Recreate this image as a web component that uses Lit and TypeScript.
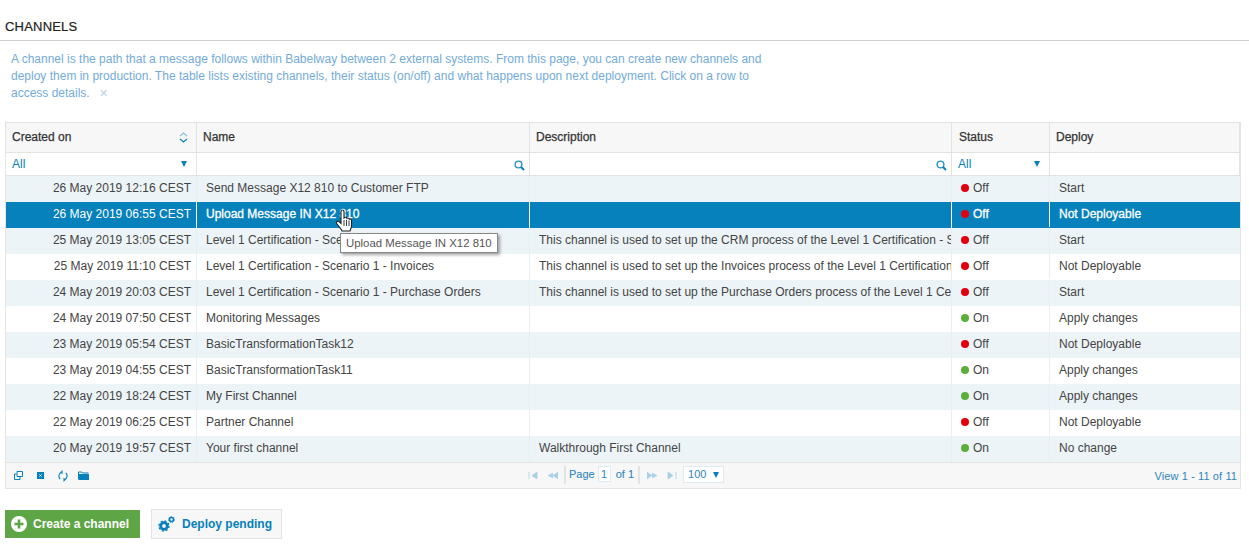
import { LitElement, html, css } from 'lit';
import { customElement } from 'lit/decorators.js';

const rows = [
  ['26 May 2019 12:16 CEST', 'Send Message X12 810 to Customer FTP', '', 'Off', 'Start'],
  ['26 May 2019 06:55 CEST', 'Upload Message IN X12 810', '', 'Off', 'Not Deployable'],
  ['25 May 2019 13:05 CEST', 'Level 1 Certification - Scenario 1 - CRM', 'This channel is used to set up the CRM process of the Level 1 Certification - Scenario 1', 'Off', 'Start'],
  ['25 May 2019 11:10 CEST', 'Level 1 Certification - Scenario 1 - Invoices', 'This channel is used to set up the Invoices process of the Level 1 Certification - Scenario 1', 'Off', 'Not Deployable'],
  ['24 May 2019 20:03 CEST', 'Level 1 Certification - Scenario 1 - Purchase Orders', 'This channel is used to set up the Purchase Orders process of the Level 1 Certification', 'Off', 'Start'],
  ['24 May 2019 07:50 CEST', 'Monitoring Messages', '', 'On', 'Apply changes'],
  ['23 May 2019 05:54 CEST', 'BasicTransformationTask12', '', 'Off', 'Not Deployable'],
  ['23 May 2019 04:55 CEST', 'BasicTransformationTask11', '', 'On', 'Apply changes'],
  ['22 May 2019 18:24 CEST', 'My First Channel', '', 'On', 'Apply changes'],
  ['22 May 2019 06:25 CEST', 'Partner Channel', '', 'Off', 'Not Deployable'],
  ['20 May 2019 19:57 CEST', 'Your first channel', 'Walkthrough First Channel', 'On', 'No change'],
];

const search = html`<svg class="search" width="11" height="11" viewBox="0 0 11 11"><circle cx="4.5" cy="4.5" r="3.4" fill="none" stroke="#2a93c6" stroke-width="1.4"/><path d="M7 7l3 3" stroke="#0681bb" stroke-width="2"/></svg>`;
const caret = html`<span class="caret"></span>`;

@customElement('app-root')
export class AppRoot extends LitElement {
  static styles = css`
    :host {
      display: block;
      height: 554px;
      overflow: hidden;
      background: #fff;
      font-family: 'Liberation Sans', Arial, sans-serif;
      font-size: 12px;
      color: #444;
    }
    .title {
      margin: 0;
      padding: 19px 0 5px 5px;
      height: 16px;
      line-height: 16px;
      font-size: 13px;
      font-weight: 400;
      letter-spacing: 0.2px;
      color: #222;
      -webkit-text-stroke: 0.2px #222;
      border-bottom: 1px solid #d0d0d0;
    }
    .intro {
      width: 770px;
      margin: 0;
      padding: 10px 0 0 11px;
      height: 70px;
      box-sizing: border-box;
      line-height: 17px;
      color: #74abd8;
    }
    .intro .x { margin-left: 6px; color: #b9d3e6; font-size: 11px; }
    .table {
      position: relative;
      margin: 11px 8px 0 5px;
      border: 1px solid #e3e3e3;
    }
    .row {
      display: grid;
      grid-template-columns: 191px 333px 422px 98px 1fr;
      height: 26px;
      line-height: 25px;
      background: #fff;
      color: #444;
    }
    .row.odd { background: #ecf4f8; }
    .row.sel { background: #0681bb; color: #fff; -webkit-text-stroke: 0.3px #fff; }
    .row.sel .date { -webkit-text-stroke: 0; }
    .row > div {
      border-right: 1px solid #e6eff4;
      white-space: nowrap;
      overflow: hidden;
      box-sizing: border-box;
    }
    .row.sel > div { border-right-color: #fff; }
    .row > div:last-child { border-right: 0; }
    .date { text-align: right; padding-right: 5px; }
    .name { padding-left: 9px; }
    .desc { padding-left: 9px; }
    .status { padding-left: 9px; height: 25px; display: flex; align-items: center; gap: 4px; }
    .deploy { padding-left: 9px; }
    .dot { width: 8px; height: 8px; margin-top: -1px; border-radius: 50%; flex: none; }
    .dot.Off { background: #e2000f; }
    .dot.On { background: #5aaf3c; }
    .row.head {
      height: 30px;
      line-height: 28px;
      background: #f7f7f7;
      color: #333;
      -webkit-text-stroke: 0.25px #333;
      border-bottom: 1px solid #e3e3e3;
      box-sizing: border-box;
    }
    .row.head > div { border-right: 1px solid #e3e3e3; padding-left: 6px; position: relative; }
    .row.head > div:nth-child(4) { padding-left: 7px; }
    .sort { position: absolute; right: 8px; top: 9px; }
    .row.filter {
      height: 23px;
      line-height: 22px;
      background: #fff;
      color: #0681bb;
      border-bottom: 1px solid #e3e3e3;
      box-sizing: border-box;
    }
    .row.filter > div {
      border-right: 1px solid #e3e3e3;
      padding: 0 6px;
      display: flex;
      align-items: center;
      justify-content: space-between;
    }
    .caret {
      width: 0;
      height: 0;
      margin-right: 3px;
      border-left: 3.5px solid transparent;
      border-right: 3.5px solid transparent;
      border-top: 6px solid #0681bb;
    }
    .search { margin: 2px -2px 0 0; }
    .foot {
      display: grid;
      grid-template-columns: 1fr auto 1fr;
      align-items: center;
      height: 26px;
      font-size: 11px;
      background: #f7f7f7;
      border-top: 1px solid #e3e3e3;
      box-sizing: border-box;
      color: #2f86bb;
    }
    .tools { display: flex; align-items: center; padding-left: 8px; }
    .pager { display: flex; align-items: center; margin-right: 1px; }
    .pg { display: flex; gap: 9px; padding: 0 6px 0 7px; }
    .sep { width: 2px; height: 18px; margin-bottom: 2px; background: #e3e3e3; }
    .pageno {
      width: 11px;
      height: 14px;
      line-height: 14px;
      margin: 0 5px 3px 3px;
      text-align: center;
      background: #fff;
      border: 1px solid #ddeaf2;
    }
    .of { margin-bottom: 3px; -webkit-text-stroke: 0.1px #2f86bb; }
    .size {
      display: flex;
      align-items: center;
      gap: 7px;
      line-height: 15px;
      width: 41px;
      box-sizing: border-box;
      height: 17px;
      margin-bottom: 2px;
      padding: 0 0 0 4px;
      background: #fff;
      border: 1px solid #ddeaf2;
    }
    .view { text-align: right; padding-right: 3px; letter-spacing: 0.1px; }
    .actions { display: flex; align-items: center; gap: 11px; margin: 20px 0 0 5px; }
    .btn {
      display: flex;
      align-items: center;
      box-sizing: border-box;
      font-weight: 700;
    }
    .create { width: 135px; height: 28px; background: #5ea546; color: #fff; gap: 6px; padding-left: 6px; }
    .pending {
      width: 131px;
      height: 30px;
      gap: 7px;
      padding-left: 6px;
      background: #f7f7f7;
      border: 1px solid #e3e3e3;
      color: #0681bb;
    }
    .tip {
      position: absolute;
      left: 334px;
      top: 110px;
      height: 20px;
      line-height: 19px;
      padding: 0 5px;
      font-size: 11.4px;
      background: #fff;
      color: #555;
      border: 1px solid #888;
      box-sizing: border-box;
      box-shadow: 2px 2px 3px rgba(0, 0, 0, 0.35);
      white-space: nowrap;
    }
    .hand { position: absolute; left: 329px; top: 86px; }
  `;

  render() {
    return html`
      <h1 class="title">CHANNELS</h1>
      <p class="intro">
        A channel is the path that a message follows within Babelway between 2 external systems. From this page, you can create new channels and
        deploy them in production. The table lists existing channels, their status (on/off) and what happens upon next deployment. Click on a row to
        access details. <span class="x">✕</span>
      </p>
      <div class="table">
        <div class="row head">
          <div>Created on
            <svg class="sort" width="9" height="11" viewBox="0 0 9 11"><path d="M1 4l3.500-3L8 4" fill="none" stroke="#8cc0dc" stroke-width="1.200"/><path d="M1 7l3.500 3L8 7" fill="none" stroke="#0681bb" stroke-width="1.200"/></svg>
          </div>
          <div>Name</div><div>Description</div><div>Status</div><div>Deploy</div>
        </div>
        <div class="row filter">
          <div>All ${caret}</div>
          <div><span></span>${search}</div>
          <div><span></span>${search}</div>
          <div>All ${caret}</div>
          <div></div>
        </div>
        ${rows.map((r, i) => html`
          <div class="row ${i % 2 === 0 ? 'odd' : ''} ${i === 1 ? 'sel' : ''}">
            <div class="date">${r[0]}</div>
            <div class="name">${r[1]}</div>
            <div class="desc">${r[2]}</div>
            <div class="status"><span class="dot ${r[3]}"></span>${r[3]}</div>
            <div class="deploy">${r[4]}</div>
          </div>`)}
        <div class="foot">
          <div class="tools">
            <svg width="9" height="9" viewBox="0 0 9 9" style="margin-right:14px"><path d="M3 .5h5.500v5H3zM2.500 3H.5v5.500H6V6" fill="none" stroke="#0681bb"/></svg>
            <svg width="7" height="7" viewBox="0 0 7 7" style="margin-right:14px"><rect width="7" height="7" fill="#0681bb"/><path d="M2.300 2.300l2.400 2.400M4.700 2.300L2.300 4.700" stroke="#fff" stroke-width=".8"/></svg>
            <svg width="10" height="12" viewBox="0 0 10 12" style="margin-right:10px"><path d="M3.500 2.300A4 4 0 0 0 2.200 9M6.500 9.700A4 4 0 0 0 7.800 3" fill="none" stroke="#0681bb" stroke-width="1.100"/><path d="M4.500 0v4.500L2.300 2.300zM5.500 12V7.500l2.200 2.200z" fill="#0681bb"/></svg>
            <svg width="11" height="9" viewBox="0 0 11 9"><path d="M.5 8.500V1h3.300l1 1h5.700" fill="none" stroke="#0681bb"/><path d="M1 3h10v6H1z" fill="#0681bb"/></svg>
          </div>
          <div class="pager">
            <div class="pg">
              <svg width="10" height="7" viewBox="0 0 10 7"><path d="M1 0v7M9 0v7L4 3.500z" fill="#a9d0e6" stroke="#a9d0e6" stroke-width=".8"/></svg>
              <svg width="11" height="7" viewBox="0 0 11 7"><path d="M11 0v7L6 3.500zM6 1L1 3.500 6 6" fill="#a9d0e6" stroke="#a9d0e6" stroke-width=".6"/></svg>
            </div>
            <span class="sep"></span>
            <span class="of" style="margin-left:3px">Page</span><span class="pageno">1</span><span class="of">of 1</span>
            <span class="sep" style="margin-left:4px"></span>
            <div class="pg">
              <svg width="11" height="7" viewBox="0 0 11 7"><path d="M0 0v7L5 3.500zM5 1l5 2.500L5 6" fill="#a9d0e6" stroke="#a9d0e6" stroke-width=".6"/></svg>
              <svg width="10" height="7" viewBox="0 0 10 7"><path d="M9 0v7M1 0v7L6 3.500z" fill="#a9d0e6" stroke="#a9d0e6" stroke-width=".8"/></svg>
            </div>
            <span class="size">100 ${caret}</span>
          </div>
          <div class="view">View 1 - 11 of 11</div>
        </div>
        <div class="tip">Upload Message IN X12 810</div>
        <svg class="hand" width="18" height="24" viewBox="0 0 18 24">
          <path d="M6 3c0-2.600 3-2.600 3 0v6l.5-.4c1.100-.7 2.300-.2 2.500.8.900-.7 2.300-.2 2.400.8 1-.4 2.100.2 2.100 1.300v5c0 2.500-1 3.800-1.500 5.500H7c-.5-2-3.500-4.500-5.300-7.500-.9-1.800 1-3 2.300-1.800L6 14.500z" fill="#fff" stroke="#222" stroke-width="1.100"/>
          <path d="M9 11v6M11.500 11v6M14 11.500V17" stroke="#222" stroke-width=".9"/>
        </svg>
      </div>
      <div class="actions">
        <div class="btn create">
          <svg width="16" height="16" viewBox="0 0 16 16"><circle cx="8" cy="8" r="8" fill="#fff"/><path d="M8 3.500v9M3.500 8h9" stroke="#5ea546" stroke-width="2.600"/></svg>
          Create a channel
        </div>
        <div class="btn pending">
          <svg width="17" height="16" viewBox="0 0 17 16"><circle cx="6" cy="10" r="3.300" fill="none" stroke="#0681bb" stroke-width="2.800"/><circle cx="6" cy="10" r="5" fill="none" stroke="#0681bb" stroke-width="1.400" stroke-dasharray="2 1.900"/><circle cx="13.500" cy="3.500" r="2" fill="none" stroke="#0681bb" stroke-width="1.600"/><circle cx="13.500" cy="3.500" r="3" fill="none" stroke="#0681bb" stroke-width=".9" stroke-dasharray="1.300 1.300"/></svg>
          Deploy pending
        </div>
      </div>
    `;
  }
}
